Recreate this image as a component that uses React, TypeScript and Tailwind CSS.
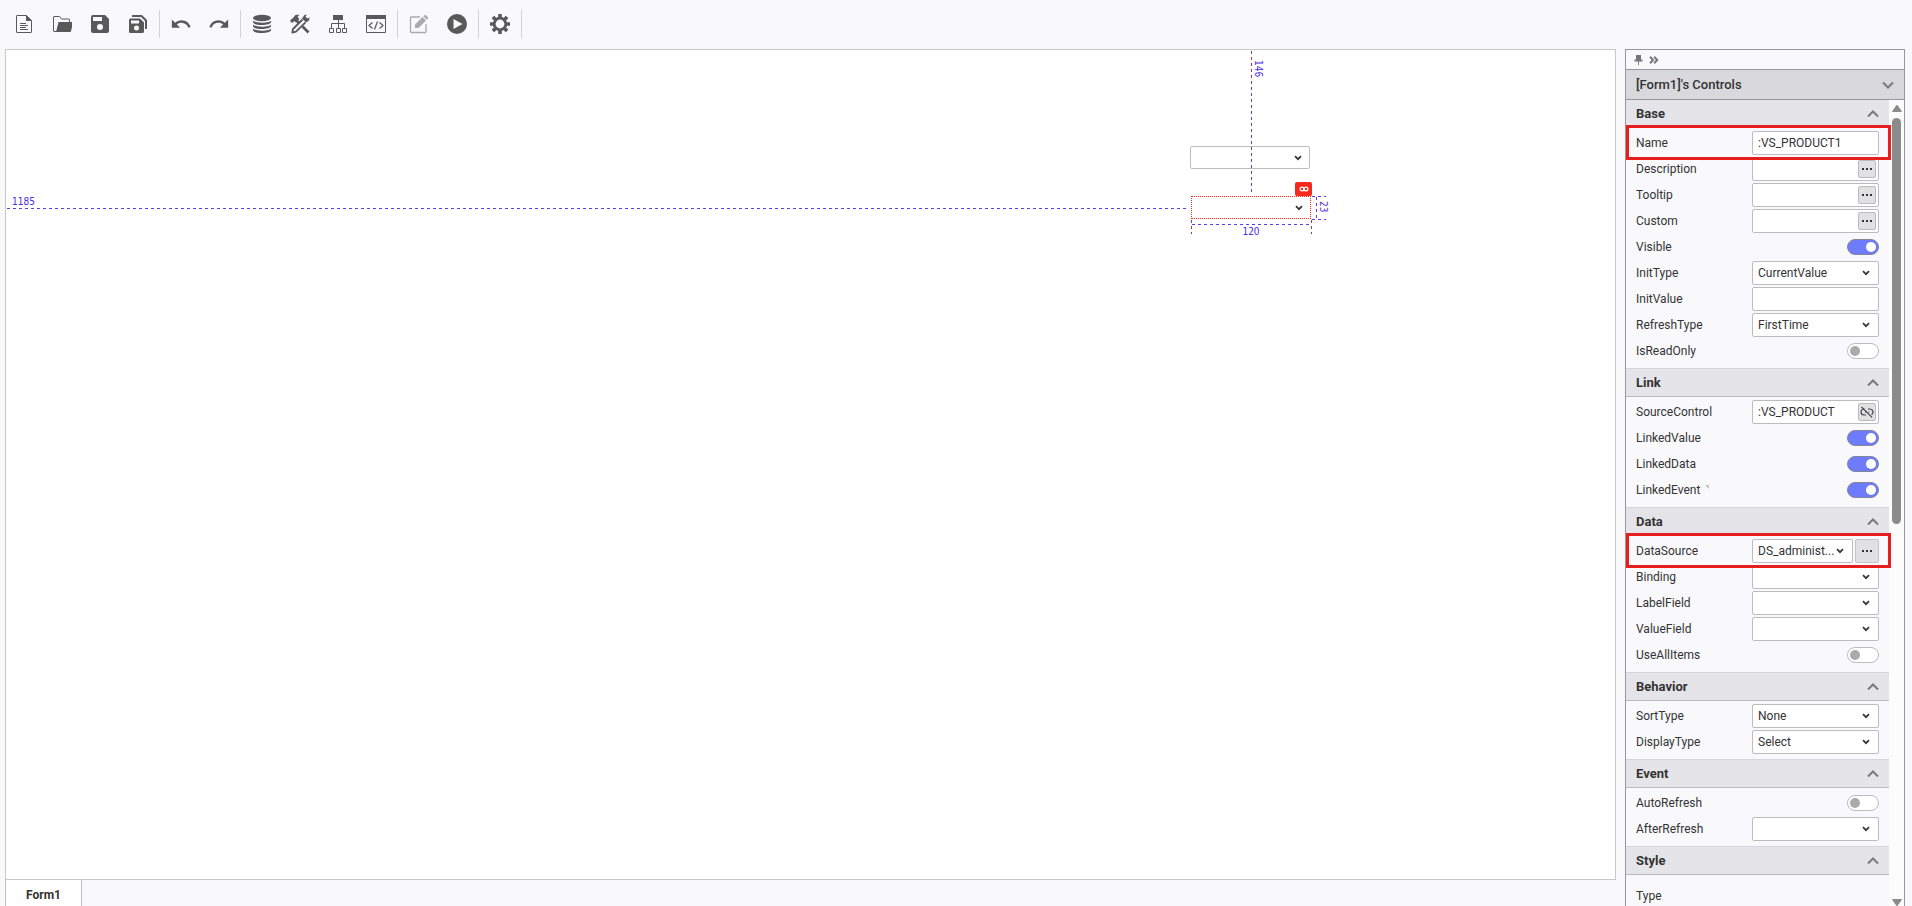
import { useState, type ReactNode } from "react";
import { MdRedo, MdUndo } from "react-icons/md";

/* ---------- toolbar icons ---------- */

function Icon({ children }: { children: ReactNode }) {
  return (
    <svg viewBox="0 0 20 20" className="w-5 h-5" fill="none" aria-hidden="true">
      {children}
    </svg>
  );
}

const NewIcon = () => (
  <Icon>
    <path d="M12.5 1.5H3a.5.5 0 0 0-.5.5v16a.5.5 0 0 0 .5.5h14a.5.5 0 0 0 .5-.5V6.5z" stroke="currentColor" />
    <path d="M12 1l6 6h-6z" fill="currentColor" />
    <path d="M6 9.5h6M6 11.5h8M6 13.5h6M6 15.5h8" stroke="currentColor" />
  </Icon>
);

const OpenIcon = () => (
  <Icon>
    <path d="M5 17.5H2a.5.5 0 0 1-.5-.5V3a.5.5 0 0 1 .5-.5h5.5L9.5 5H17a.5.5 0 0 1 .5.5V8" stroke="currentColor" />
    <path d="M6.5 8h14a.5.5 0 0 1 .5.6l-2 8.7a1 1 0 0 1-1 .7H4z" fill="currentColor" />
  </Icon>
);

const SaveIcon = () => (
  <Icon>
    <path
      fillRule="evenodd"
      fill="currentColor"
      d="M3 1h12l4 4v12a2 2 0 0 1-2 2H3a2 2 0 0 1-2-2V3a2 2 0 0 1 2-2zM3 3v4h9V3zM10 10a3 3 0 1 0 0 6a3 3 0 0 0 0-6z"
    />
  </Icon>
);

const SaveAllIcon = () => (
  <Icon>
    <path
      fillRule="evenodd"
      fill="currentColor"
      d="M2.5 4.5H12l4 4v9a1.500 1.500 0 0 1-1.500 1.500h-12A1.500 1.500 0 0 1 1 17.500V6a1.500 1.500 0 0 1 1.500-1.500zM3 6.500v3h8v-3zM8.500 11.500a2.500 2.500 0 1 0 0 5a2.500 2.500 0 0 0 0-5z"
    />
    <path d="M4 2h9.500L18 6.500V15" stroke="currentColor" strokeWidth="2" />
  </Icon>
);

const DatabaseIcon = () => (
  <Icon>
    <ellipse cx="10" cy="4" rx="9" ry="3.200" fill="currentColor" />
    <path
      fill="currentColor"
      d="M1 6c0 3.600 18 3.600 18 0v2c0 4-18 4-18 0zM1 10c0 3.600 18 3.600 18 0v2c0 4-18 4-18 0zM1 14c0 3.600 18 3.600 18 0v2c0 4-18 4-18 0z"
    />
  </Icon>
);

const ToolsIcon = () => (
  <Icon>
    <path d="M0 6.500L3 4L5 1.500L6 .8H9.500L7.500 3L9.500 5L6 8.500L4.500 7L2 9z" fill="currentColor" />
    <path d="M6 6l3 3M12.500 12.500L18.500 18.500" stroke="currentColor" strokeWidth="2.800" />
    <path d="M12 4.500L14.500 1L17 .5L15.500 2.500L17.500 4.500L19.700 3.500L19 6.500L16 8.500z" fill="currentColor" />
    <path d="M12.500 5.500L3 15L2.300 18.500L6 17.700L15.500 8.300" stroke="currentColor" strokeWidth="1.800" strokeLinejoin="round" />
  </Icon>
);

const SitemapIcon = () => (
  <Icon>
    <path d="M5 1h10v5H5z" fill="currentColor" />
    <path
      d="M10.500 6v8M3.500 14v-4.500h13V14M1.500 14.500h4v4h-4zM8.500 14.500h4v4h-4zM14.500 14.500h4v4h-4z"
      stroke="currentColor"
    />
  </Icon>
);

const CodeIcon = () => (
  <Icon>
    <path d="M.5 1.500h19v17H.5z" stroke="currentColor" />
    <path d="M0 1h20v4H0z" fill="currentColor" />
    <path d="M6.500 8.500L3 11.500l3.500 3M13.500 8.500l3.500 3l-3.500 3M11.500 7.500l-3 8" stroke="currentColor" strokeWidth="1.200" />
  </Icon>
);

const EditIcon = () => (
  <Icon>
    <path d="M11 3H2.500a1 1 0 0 0-1 1v13.500a1 1 0 0 0 1 1H16a1 1 0 0 0 1-1V10" stroke="currentColor" strokeWidth="1.300" />
    <path
      fill="currentColor"
      d="M6 10.500l7.500-7.500l3.500 3.500L9.500 14H6zM14.300 2.200l1-1a1 1 0 0 1 1.400 0l2.100 2.100a1 1 0 0 1 0 1.400l-1 1z"
    />
  </Icon>
);

const PlayIcon = () => (
  <Icon>
    <path
      fillRule="evenodd"
      fill="currentColor"
      d="M10 0a10 10 0 1 0 0 20a10 10 0 0 0 0-20zM6.500 5v10l9-5z"
    />
  </Icon>
);

const GearIcon = () => (
  <Icon>
    <circle cx="10" cy="10" r="5.800" stroke="currentColor" strokeWidth="2.800" />
    <path
      d="M10 0v4M10 16v4M0 10h4M16 10h4M2.900 2.900l2.800 2.800M14.300 14.300l2.800 2.800M2.900 17.100l2.800-2.800M14.300 5.700l2.800-2.800"
      stroke="currentColor"
      strokeWidth="3.600"
    />
  </Icon>
);

const toolGroups = [
  [
    { name: "New", icon: <NewIcon /> },
    { name: "Open", icon: <OpenIcon /> },
    { name: "Save", icon: <SaveIcon /> },
    { name: "Save all", icon: <SaveAllIcon /> },
  ],
  [
    { name: "Undo", icon: <MdUndo size={22} /> },
    { name: "Redo", icon: <MdRedo size={22} /> },
  ],
  [
    { name: "Data sources", icon: <DatabaseIcon /> },
    { name: "Tools", icon: <ToolsIcon /> },
    { name: "Structure", icon: <SitemapIcon /> },
    { name: "Script", icon: <CodeIcon /> },
  ],
  [
    { name: "Edit", icon: <EditIcon />, disabled: true },
    { name: "Run", icon: <PlayIcon /> },
  ],
  [{ name: "Settings", icon: <GearIcon /> }],
];

function Toolbar() {
  return (
    <header className="flex items-start h-[49px] shrink-0 pt-[10px] pl-[3px]">
      {toolGroups.map((group, i) => (
        <div key={i} className="flex h-7 px-[2px] border-r border-[#d4d4d8]">
          {group.map((tool) => (
            <button
              key={tool.name}
              type="button"
              aria-label={tool.name}
              disabled={"disabled" in tool}
              className="flex items-center justify-center w-[38px] text-[#595959] disabled:text-[#aaaaaa]"
            >
              {tool.icon}
            </button>
          ))}
        </div>
      ))}
    </header>
  );
}

/* ---------- small shared pieces ---------- */

function SelectArrow() {
  return (
    <svg viewBox="0 0 8 6" className="w-2 h-[6px]" fill="none" aria-hidden="true">
      <path d="M1 1.200L4 4.200L7 1.200" stroke="#333333" strokeWidth="1.700" />
    </svg>
  );
}

function Chevron({ down }: { down?: boolean }) {
  return (
    <svg viewBox="0 0 12 8" className="w-3 h-2" fill="none" aria-hidden="true">
      <path d={down ? "M1 1.500L6 6.500L11 1.500" : "M1 6.500L6 1.500L11 6.500"} stroke="#7a7a7a" strokeWidth="2" />
    </svg>
  );
}

function Dots() {
  return (
    <svg viewBox="0 0 10 2" className="w-[10px] h-[2px]" fill="#333333" aria-hidden="true">
      <path d="M0 0h2v2H0zM4 0h2v2H4zM8 0h2v2H8z" />
    </svg>
  );
}

/* ---------- canvas ---------- */

const dashX = "absolute h-px bg-[repeating-linear-gradient(to_right,#5b3df0_0_3px,transparent_3px_6px)]";
const dashY = "absolute w-px bg-[repeating-linear-gradient(to_bottom,#5b3df0_0_3px,transparent_3px_6px)]";

function Canvas() {
  return (
    <main className="relative flex-1 bg-white border border-[#c8c8c8] overflow-hidden text-[#4a2be8] text-[10px] leading-3 font-['DejaVu_Sans_Condensed','DejaVu_Sans',sans-serif]">
      {/* first combo box */}
      <div className="absolute left-[1184px] top-[96px] w-[120px] h-[23px]">
        <select aria-label="VS_PRODUCT" className="w-full h-full appearance-none bg-white border border-[#bcbcbc] rounded-[2px]" />
        <span className="absolute right-2 top-[9px] pointer-events-none">
          <SelectArrow />
        </span>
      </div>

      {/* selected combo box */}
      <div className="absolute left-[1185px] top-[146px] w-[120px] h-[23px]">
        <select aria-label="VS_PRODUCT1" className="w-full h-full appearance-none bg-white border border-dotted border-[#f52a1c]" />
        <span className="absolute right-2 top-[9px] pointer-events-none">
          <SelectArrow />
        </span>
      </div>
      <span className="absolute left-[1289px] top-[132px] w-[17px] h-[14px] flex items-center justify-center bg-[#f52a1c] rounded-[2px]">
        <svg viewBox="0 0 10 6" className="w-[10px] h-[6px]" fill="none" stroke="#ffffff" strokeWidth="1.300" aria-hidden="true">
          <circle cx="3" cy="3" r="1.900" />
          <circle cx="7" cy="3" r="1.900" />
        </svg>
      </span>

      {/* distance guides */}
      <div className={`${dashY} left-[1245px] top-px h-[141px]`} />
      <span className="absolute left-[1246px] top-[10px] [writing-mode:vertical-rl]">146</span>
      <div className={`${dashX} left-px top-[158px] w-[1180px]`} />
      <span className="absolute left-[6px] top-[146px]">1185</span>

      {/* size guides */}
      <div className={`${dashY} left-[1185px] top-[170px] h-[14px]`} />
      <div className={`${dashY} left-[1305px] top-[170px] h-[14px]`} />
      <div className={`${dashX} left-[1186px] top-[174px] w-[119px]`} />
      <span className="absolute left-[1185px] top-[176px] w-[120px] text-center">120</span>
      <div className={`${dashX} left-[1306px] top-[146px] w-[14px]`} />
      <div className={`${dashX} left-[1306px] top-[169px] w-[14px]`} />
      <div className={`${dashY} left-[1310px] top-[147px] h-[22px]`} />
      <span className="absolute left-[1311px] top-[151px] [writing-mode:vertical-rl]">23</span>
    </main>
  );
}

/* ---------- property panel ---------- */

type Field = {
  name: string;
  kind: "text" | "more" | "link" | "select" | "selectMore" | "toggle" | "label";
  value?: string;
  on?: boolean;
  marked?: boolean;
  hint?: boolean;
};

const sections: { title: string; fields: Field[] }[] = [
  {
    title: "Base",
    fields: [
      { name: "Name", kind: "text", value: ":VS_PRODUCT1", marked: true },
      { name: "Description", kind: "more" },
      { name: "Tooltip", kind: "more" },
      { name: "Custom", kind: "more" },
      { name: "Visible", kind: "toggle", on: true },
      { name: "InitType", kind: "select", value: "CurrentValue" },
      { name: "InitValue", kind: "text" },
      { name: "RefreshType", kind: "select", value: "FirstTime" },
      { name: "IsReadOnly", kind: "toggle" },
    ],
  },
  {
    title: "Link",
    fields: [
      { name: "SourceControl", kind: "link", value: ":VS_PRODUCT" },
      { name: "LinkedValue", kind: "toggle", on: true },
      { name: "LinkedData", kind: "toggle", on: true },
      { name: "LinkedEvent", kind: "toggle", on: true, hint: true },
    ],
  },
  {
    title: "Data",
    fields: [
      { name: "DataSource", kind: "selectMore", value: "DS_administ...", marked: true },
      { name: "Binding", kind: "select" },
      { name: "LabelField", kind: "select" },
      { name: "ValueField", kind: "select" },
      { name: "UseAllItems", kind: "toggle" },
    ],
  },
  {
    title: "Behavior",
    fields: [
      { name: "SortType", kind: "select", value: "None" },
      { name: "DisplayType", kind: "select", value: "Select" },
    ],
  },
  {
    title: "Event",
    fields: [
      { name: "AutoRefresh", kind: "toggle" },
      { name: "AfterRefresh", kind: "select" },
    ],
  },
  { title: "Style", fields: [{ name: "Type", kind: "label" }] },
];

function Toggle({ id, on }: { id: string; on?: boolean }) {
  const [checked, setChecked] = useState(!!on);
  return (
    <input
      id={id}
      type="checkbox"
      role="switch"
      checked={checked}
      onChange={(e) => setChecked(e.target.checked)}
      className="appearance-none flex items-center w-8 h-4 px-[2px] rounded-full border border-[#bcbcbc] bg-white before:block before:w-[10px] before:h-[10px] before:rounded-full before:bg-[#aaaaaa] checked:justify-end checked:border-[#85859a] checked:bg-[#6e7cfb] checked:before:bg-white"
    />
  );
}

function SelectBox({ id, value = "" }: { id: string; value?: string }) {
  return (
    <div className="relative flex-1 h-6">
      <select
        id={id}
        defaultValue={value}
        className="w-full h-full pl-[5px] appearance-none bg-white border border-[#bcbcbc] rounded-[2px]"
      >
        <option>{value}</option>
      </select>
      <span className="absolute right-[9px] top-[9px] pointer-events-none">
        <SelectArrow />
      </span>
    </div>
  );
}

function Control({ id, field }: { id: string; field: Field }) {
  switch (field.kind) {
    case "toggle":
      return <Toggle id={id} on={field.on} />;
    case "select":
      return <SelectBox id={id} value={field.value} />;
    case "selectMore":
      return (
        <>
          <SelectBox id={id} value={field.value} />
          <button
            type="button"
            aria-label={`${field.name} options`}
            className="flex items-center justify-center w-6 h-6 ml-[2px] bg-[#e1e1e4] border border-[#c4c4c8] rounded-[2px]"
          >
            <Dots />
          </button>
        </>
      );
    case "text":
      return (
        <input
          id={id}
          type="text"
          defaultValue={field.value}
          className="flex-1 min-w-0 h-6 pl-[5px] bg-white border border-[#bcbcbc] rounded-[2px]"
        />
      );
    case "more":
    case "link":
      return (
        <div className="flex flex-1 min-w-0 items-center h-6 pr-[2px] bg-white border border-[#bcbcbc] rounded-[2px]">
          <input id={id} type="text" defaultValue={field.value} className="flex-1 min-w-0 pl-[5px]" />
          <button
            type="button"
            aria-label={`${field.name} options`}
            className="flex items-center justify-center w-[18px] h-[18px] bg-[#e1e1e4] border border-[#bcbcbc] rounded-[2px]"
          >
            {field.kind === "more" ? (
              <Dots />
            ) : (
              <svg viewBox="0 0 14 12" className="w-[14px] h-3" fill="none" stroke="#444444" strokeWidth="1.200" aria-hidden="true">
                <path d="M4.500 3H4a3 3 0 0 0 0 6h2M8 3h2a3 3 0 0 1 1.500 5.600M5 6h1.500M8.500 6h1M1.500 .8l10.500 10.500" />
              </svg>
            )}
          </button>
        </div>
      );
    default:
      return null;
  }
}

function Row({ field }: { field: Field }) {
  const id = `prop-${field.name}`;
  if (field.kind === "label") {
    return <div className="flex items-center h-[38px] px-[10px]">{field.name}</div>;
  }
  return (
    <div className="relative flex items-center h-[26px] px-[10px]">
      <label htmlFor={id} className="flex-1">
        {field.name}
        {field.hint && (
          <svg viewBox="0 0 4 4" className="inline-block w-1 h-1 ml-[5px] -mt-2" fill="#c4c4c4" aria-hidden="true">
            <path d="M0 0h4v4z" />
          </svg>
        )}
      </label>
      <div className="flex items-center justify-end w-[127px]">
        <Control id={id} field={field} />
      </div>
      {field.marked && (
        <div className="absolute z-10 left-0 -right-[2px] -top-[5px] -bottom-1 border-3 border-[#e81e1e] pointer-events-none" />
      )}
    </div>
  );
}

function PropertyPanel() {
  return (
    <aside className="flex flex-col w-[280px] shrink-0 border border-b-0 border-[#98989c] bg-[#f9f9fc]">
      <div className="flex items-center gap-[6px] h-[19px] shrink-0 pl-2">
        <button type="button" aria-label="Pin panel">
          <svg viewBox="0 0 9 10" className="w-[9px] h-[10px]" fill="#777777" aria-hidden="true">
            <path d="M2 0h5v4.500h1.500V6.500H5V10H4V6.500H.5V4.500H2z" />
          </svg>
        </button>
        <button type="button" aria-label="Collapse panel">
          <svg viewBox="0 0 10 8" className="w-[10px] h-2" fill="none" stroke="#777777" strokeWidth="2" aria-hidden="true">
            <path d="M1 .8L4 4L1 7.200M5.200 .8L8.200 4L5.200 7.200" />
          </svg>
        </button>
      </div>
      <button
        type="button"
        className="flex items-center justify-between h-[30px] shrink-0 px-[10px] bg-[#d9d9dd] border-t border-[#98989c] text-[13px] font-medium"
      >
        [Form1]'s Controls
        <Chevron down />
      </button>

      <div className="flex flex-1 min-h-0 overflow-hidden">
        <div className="flex-1">
          {sections.map((section, i) => (
            <section key={section.title}>
              <button
                type="button"
                className={
                  i === 0
                    ? "flex items-center justify-between w-full h-[29px] px-[10px] bg-[#e5e5e9] border-t border-b border-t-[#98989c] border-b-[#bcbcbf] text-[13px] font-bold"
                    : "flex items-center justify-between w-full h-[29px] px-[10px] bg-[#e5e5e9] border-t border-b border-t-[#d6d6da] border-b-[#bcbcbf] text-[13px] font-bold"
                }
              >
                {section.title}
                <Chevron />
              </button>
              <div className="pt-[2px] pb-1">
                {section.fields.map((field) => (
                  <Row key={field.name} field={field} />
                ))}
              </div>
            </section>
          ))}
        </div>

        {/* scroll bar */}
        <div className="flex flex-col items-center w-[15px] pt-[5px] bg-[#fcfcfc] border-t border-[#98989c]">
          <svg viewBox="0 0 10 7" className="w-[10px] h-[7px]" fill="#8b8b8b" aria-hidden="true">
            <path d="M4.200 .5a1 1 0 0 1 1.600 0L9.700 6a.6.6 0 0 1-.5 1H.8a.6.6 0 0 1-.5-1z" />
          </svg>
          <div className="flex-1 w-[9px] pt-[6px]">
            <div className="w-full h-[52%] bg-[#8b8b8b] rounded-full" />
          </div>
          <svg viewBox="0 0 10 7" className="w-[10px] h-[7px]" fill="#8b8b8b" aria-hidden="true">
            <path d="M4.200 6.500a1 1 0 0 0 1.600 0L9.700 1a.6.6 0 0 0-.5-1H.8a.6.6 0 0 0-.5 1z" />
          </svg>
        </div>
      </div>
    </aside>
  );
}

export default function App() {
  return (
    <div className="flex flex-col h-screen overflow-hidden bg-[#f9f9fc] text-[#333333] text-[12px] font-[Roboto,'Noto_Sans',sans-serif]">
      <Toolbar />
      <div className="flex flex-1 min-h-0 gap-[9px] pl-[5px] pr-[7px]">
        <div className="flex flex-col flex-1 min-w-0">
          <Canvas />
          <nav className="flex h-[26px] shrink-0">
            <button
              type="button"
              className="px-5 pt-[3px] bg-white border-x border-[#c0c0c0] text-[12px] font-bold"
            >
              Form1
            </button>
          </nav>
        </div>
        <PropertyPanel />
      </div>
    </div>
  );
}
